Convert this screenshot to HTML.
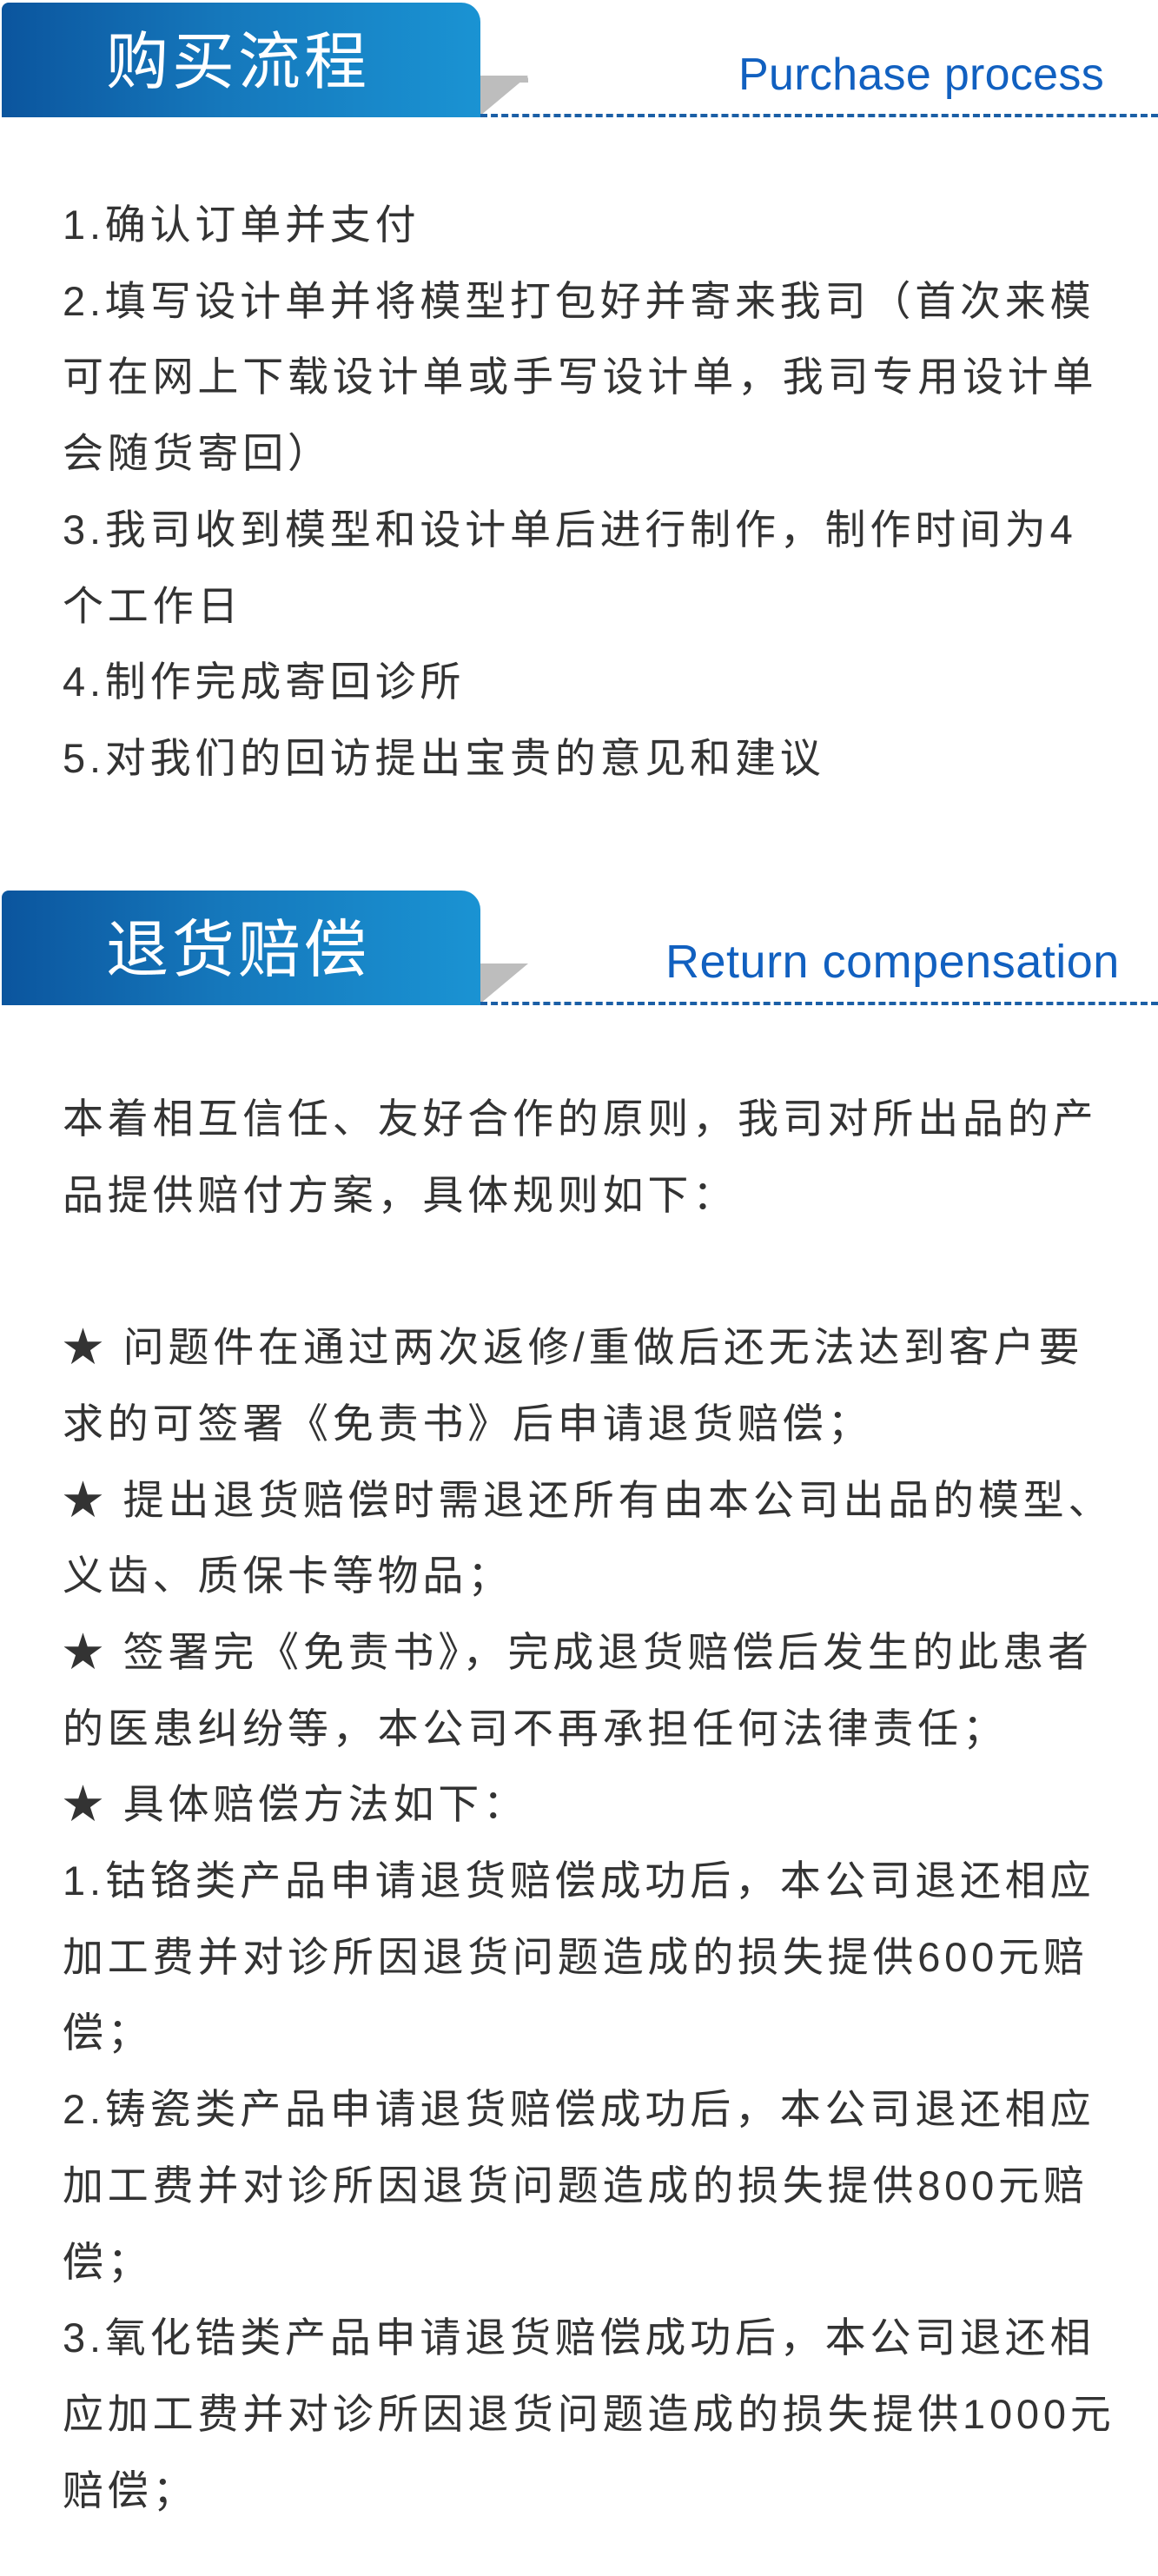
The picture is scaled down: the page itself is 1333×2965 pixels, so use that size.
<!DOCTYPE html>
<html><head><meta charset="utf-8"><style>
html,body{margin:0;padding:0;background:#fff;}
body{width:1333px;height:2965px;position:relative;overflow:hidden;font-family:"Liberation Sans","Noto Sans CJK SC",sans-serif;}
.hdr{position:absolute;left:2px;width:551px;height:132px;background:linear-gradient(90deg,#0b559e 0%,#1577bb 45%,#1a93d3 100%);border-radius:8px 22px 0 0;}
.hdr span{position:absolute;left:120px;top:20px;font-size:72px;color:#fff;font-family:"Noto Sans CJK SC",sans-serif;letter-spacing:4px;line-height:84px;}
.tri{position:absolute;left:553px;width:0;height:0;border-top:46px solid #bdbdbd;border-right:55px solid transparent;}
.tri2{position:absolute;left:553px;width:55px;height:8px;background:#bdbdbd;border-radius:0 4px 0 0;}
.dash{position:absolute;left:553px;right:0;height:0;border-top:4px dashed #1b5fa6;}
.en{position:absolute;font-size:54px;color:#1160c0;font-family:"Liberation Sans",sans-serif;line-height:60px;letter-spacing:0.5px;}
.txt{position:absolute;left:72px;font-size:47px;line-height:87.7px;color:#333;white-space:nowrap;letter-spacing:4.8px;font-family:"Liberation Sans","Noto Sans CJK SC",sans-serif;}
</style></head><body>

<div class="hdr" style="top:3px"><span>购买流程</span></div>
<div class="tri2" style="top:87px"></div>
<div class="tri" style="top:87px"></div>
<div class="dash" style="top:131px"></div>
<div class="en" style="left:850px;top:56px;font-size:52px;letter-spacing:0.3px">Purchase process</div>

<div class="txt" style="top:215px">1.确认订单并支付<br>2.填写设计单并将模型打包好并寄来我司（首次来模<br>可在网上下载设计单或手写设计单，我司专用设计单<br>会随货寄回）<br>3.我司收到模型和设计单后进行制作，制作时间为4<br>个工作日<br>4.制作完成寄回诊所<br>5.对我们的回访提出宝贵的意见和建议</div>

<div class="hdr" style="top:1025px"><span>退货赔偿</span></div>
<div class="tri" style="top:1109px"></div>
<div class="dash" style="top:1153px"></div>
<div class="en" style="left:766px;top:1077px">Return compensation</div>

<div class="txt" style="top:1244px">本着相互信任、友好合作的原则，我司对所出品的产<br>品提供赔付方案，具体规则如下：<br>&nbsp;<br>★ 问题件在通过两次返修/重做后还无法达到客户要<br>求的可签署《免责书》后申请退货赔偿；<br>★ 提出退货赔偿时需退还所有由本公司出品的模型、<br>义齿、质保卡等物品；<br>★ 签署完《免责书》，完成退货赔偿后发生的此患者<br>的医患纠纷等，本公司不再承担任何法律责任；<br>★ 具体赔偿方法如下：<br>1.钴铬类产品申请退货赔偿成功后，本公司退还相应<br>加工费并对诊所因退货问题造成的损失提供600元赔<br>偿；<br>2.铸瓷类产品申请退货赔偿成功后，本公司退还相应<br>加工费并对诊所因退货问题造成的损失提供800元赔<br>偿；<br>3.氧化锆类产品申请退货赔偿成功后，本公司退还相<br>应加工费并对诊所因退货问题造成的损失提供1000元<br>赔偿；</div>

</body></html>
